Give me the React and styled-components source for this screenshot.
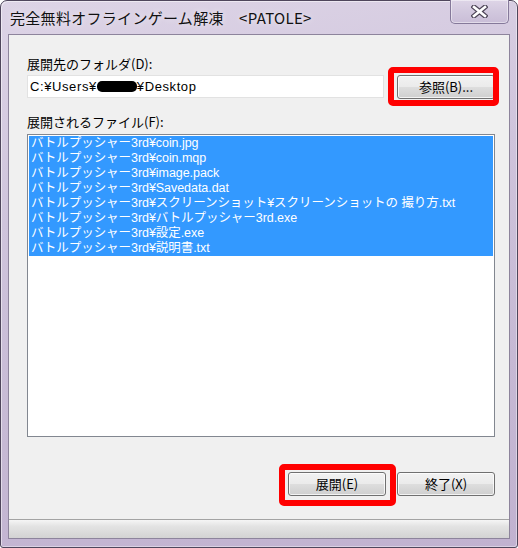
import styled, { createGlobalStyle } from 'styled-components';

const GlobalStyle = createGlobalStyle`
  html, body {
    margin: 0;
    padding: 0;
    background: #ffffff;
  }
  body {
    font-family: "Noto Sans CJK JP", "Noto Sans", sans-serif;
  }
`;

const files = [
    "バトルプッシャー3rd¥coin.jpg",
    "バトルプッシャー3rd¥coin.mqp",
    "バトルプッシャー3rd¥image.pack",
    "バトルプッシャー3rd¥Savedata.dat",
    "バトルプッシャー3rd¥スクリーンショット¥スクリーンショットの 撮り方.txt",
    "バトルプッシャー3rd¥バトルプッシャー3rd.exe",
    "バトルプッシャー3rd¥設定.exe",
    "バトルプッシャー3rd¥説明書.txt",
];

export default function App() {
    return (
        <>
            <GlobalStyle />
            <Window>
                <TitleBar>
                    <Title>完全無料オフラインゲーム解凍　&lt;PATOLE&gt;</Title>
                    <CloseButton>
                        <svg width="17" height="13" viewBox="0 0 17 13">
                            <path d="M3 2 L14 11 M14 2 L3 11" stroke="#4e4658" strokeWidth="5" strokeLinecap="square" />
                            <path d="M3 2 L14 11 M14 2 L3 11" stroke="#ffffff" strokeWidth="2.6" strokeLinecap="square" />
                        </svg>
                    </CloseButton>
                </TitleBar>
                <Client>
                    <Body>
                        <Label $top={21}>展開先のフォルダ(D):</Label>
                        <PathRow>
                            <PathInput>
                                C:¥Users¥<Redacted />¥Desktop
                            </PathInput>
                            <Marked $t={8} $l={9} $r={4} $b={7}>
                                <Button>参照(B)...</Button>
                            </Marked>
                        </PathRow>
                        <Label $top={14}>展開されるファイル(F):</Label>
                        <ListBox>
                            <Selection>
                                {files.map((f) => (
                                    <FileRow key={f}>{f}</FileRow>
                                ))}
                            </Selection>
                        </ListBox>
                        <ButtonRow>
                            <Marked $t={8} $l={9} $r={10} $b={10}>
                                <Button>展開(E)</Button>
                            </Marked>
                            <Button>終了(X)</Button>
                        </ButtonRow>
                    </Body>
                    <StatusBar />
                </Client>
            </Window>
        </>
    );
}

const Window = styled.div`
    width: 518px;
    height: 548px;
    box-sizing: border-box;
    display: flex;
    flex-direction: column;
    padding: 0 7px 8px 7px;
    border: 1px solid #4f465c;
    border-radius: 7px 7px 3px 3px;
    background: linear-gradient(170deg, #ddd4e6 0%, #cfc4dc 35%, #c6b9d4 70%, #c1b2d0 100%);
    box-shadow: inset 1px 1px 0 rgba(255, 255, 255, 0.5), inset -1px -1px 0 rgba(255, 255, 255, 0.4);
`;

const TitleBar = styled.div`
    height: 33px;
    display: flex;
    align-items: flex-start;
    justify-content: space-between;
`;

const Title = styled.div`
    margin: 7px 0 0 2px;
    font-size: 15px;
    line-height: 20px;
    letter-spacing: 0.3px;
    color: #111;
    text-shadow: 0 0 6px rgba(255, 255, 255, 0.7);
    white-space: pre;
`;

const CloseButton = styled.div`
    width: 59px;
    height: 24px;
    margin-top: -1px;
    margin-right: 1px;
    box-sizing: border-box;
    display: flex;
    align-items: center;
    justify-content: center;
    border: 1px solid #85799a;
    border-top: none;
    border-radius: 0 0 5px 5px;
    background: linear-gradient(180deg, #ded5e7 0%, #d2c8de 50%, #c9bdd7 100%);
    box-shadow: inset 0 0 0 1px rgba(255, 255, 255, 0.45);
`;

const Client = styled.div`
    flex: 1;
    display: flex;
    flex-direction: column;
    background: #f0f0f0;
    border: 1px solid #8d849c;
`;

const Body = styled.div`
    flex: 1;
    display: flex;
    flex-direction: column;
    padding: 0 14px 0 18px;
`;

const Label = styled.div`
    margin-top: ${(p) => p.$top}px;
    font-size: 13px;
    line-height: 16px;
    color: #000;
`;

const PathRow = styled.div`
    margin-top: 3px;
    display: flex;
    justify-content: space-between;
    align-items: flex-start;
    height: 25px;
`;

const PathInput = styled.div`
    width: 357px;
    height: 23px;
    box-sizing: border-box;
    padding-left: 2px;
    background: #ffffff;
    border: 1px solid #e2e2e2;
    font-family: "Liberation Sans", "Noto Sans CJK JP", sans-serif;
    font-size: 13px;
    letter-spacing: 0.6px;
    line-height: 21px;
    color: #000;
    white-space: nowrap;
`;

const Redacted = styled.span`
    display: inline-block;
    width: 40px;
    height: 11px;
    vertical-align: -1px;
    background: #000;
    border-radius: 5px;
`;

const Marked = styled.div`
    position: relative;
    display: flex;

    &::after {
        content: "";
        position: absolute;
        top: -${(p) => p.$t}px;
        left: -${(p) => p.$l}px;
        right: -${(p) => p.$r}px;
        bottom: -${(p) => p.$b}px;
        border: 6px solid #ff0000;
        border-radius: 5px;
        pointer-events: none;
    }
`;

const Button = styled.button`
    width: 98px;
    height: 24px;
    box-sizing: border-box;
    padding: 0;
    border: 1px solid #707070;
    border-radius: 3px;
    background: linear-gradient(180deg, #f2f2f2 0%, #ebebeb 48%, #dddddd 52%, #cfcfcf 100%);
    box-shadow: inset 0 0 0 1px rgba(255, 255, 255, 0.75);
    font-family: "Noto Sans CJK JP", "Noto Sans", sans-serif;
    font-size: 13px;
    line-height: 20px;
    color: #000;
`;

const ListBox = styled.div`
    margin-top: 4px;
    height: 303px;
    box-sizing: border-box;
    padding: 1px;
    background: #ffffff;
    border: 1px solid #828790;
`;

const Selection = styled.div`
    background: #3399ff;
`;

const FileRow = styled.div`
    height: 15px;
    padding-left: 2px;
    font-family: "Liberation Sans", "Noto Sans CJK JP", sans-serif;
    font-size: 12.5px;
    letter-spacing: -0.05px;
    line-height: 15px;
    color: #ffffff;
    white-space: nowrap;
`;

const ButtonRow = styled.div`
    margin-top: 35px;
    display: flex;
    justify-content: flex-end;
    gap: 11px;
`;

const StatusBar = styled.div`
    height: 18px;
    border-top: 1px solid #a3a3a3;
    background: linear-gradient(180deg, #f5f5f5 0%, #e3e3e3 35%, #d3d3d3 100%);
`;
